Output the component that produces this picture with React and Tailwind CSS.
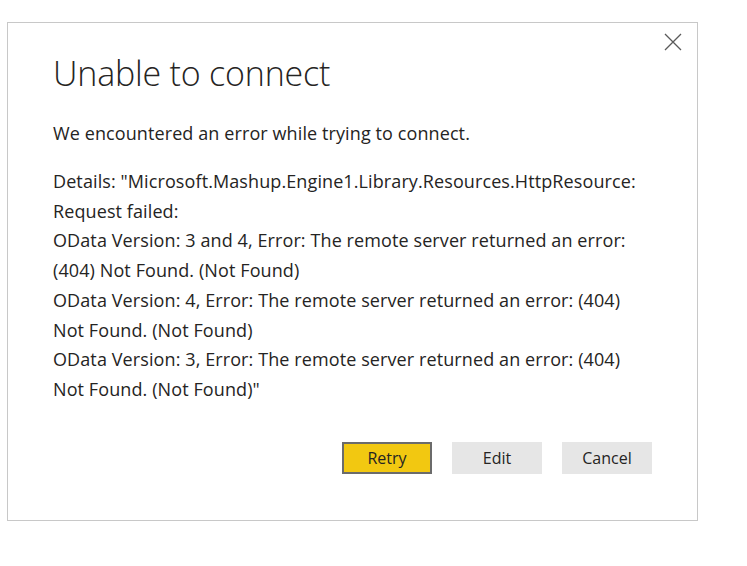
import React from 'react';

const lines = [
  'Details: "Microsoft.Mashup.Engine1.Library.Resources.HttpResource:',
  'Request failed:',
  'OData Version: 3 and 4, Error: The remote server returned an error:',
  '(404) Not Found. (Not Found)',
  'OData Version: 4, Error: The remote server returned an error: (404)',
  'Not Found. (Not Found)',
  'OData Version: 3, Error: The remote server returned an error: (404)',
  'Not Found. (Not Found)"',
];

function CloseIcon() {
  return (
    <svg width="18" height="18" viewBox="0 0 18 18" className="block">
      <path d="M1 1 L17 17 M17 1 L1 17" stroke="#5a5a5a" strokeWidth="1.3" fill="none" />
    </svg>
  );
}

export default function App() {
  return (
    <div className="w-[747px] h-[566px] bg-white pt-[22px] pl-[7px]" style={{ fontFamily: '"Open Sans", "Noto Sans", sans-serif' }}>
      <div className="relative w-[691px] h-[499px] border border-[#c8c8c8] bg-white text-[#252423]">
        <button className="absolute right-[15px] top-[10px] p-0">
          <CloseIcon />
        </button>
        <div className="pl-[45px] pr-[40px]">
          <h1 className="pt-[30px] text-[34px] font-light leading-[40px] tracking-[-0.2px]">Unable to connect</h1>
          <p className="mt-[27px] text-[18px] leading-[26px] tracking-[0.1px]">We encountered an error while trying to connect.</p>
          <div className="mt-[21px] text-[18px] leading-[29.7px] tracking-[0.1px]">
            {lines.map((l, i) => (
              <div key={i} className="whitespace-nowrap">{l}</div>
            ))}
          </div>
          <div className="mt-[37px] flex justify-end gap-[20px] pr-[5px]">
            <button className="w-[90px] h-[32px] bg-[#f2c811] border-2 border-[#6b6b6b] text-[16px]">Retry</button>
            <button className="w-[90px] h-[32px] bg-[#e6e6e6] text-[16px]">Edit</button>
            <button className="w-[90px] h-[32px] bg-[#e6e6e6] text-[16px]">Cancel</button>
          </div>
        </div>
      </div>
    </div>
  );
}
